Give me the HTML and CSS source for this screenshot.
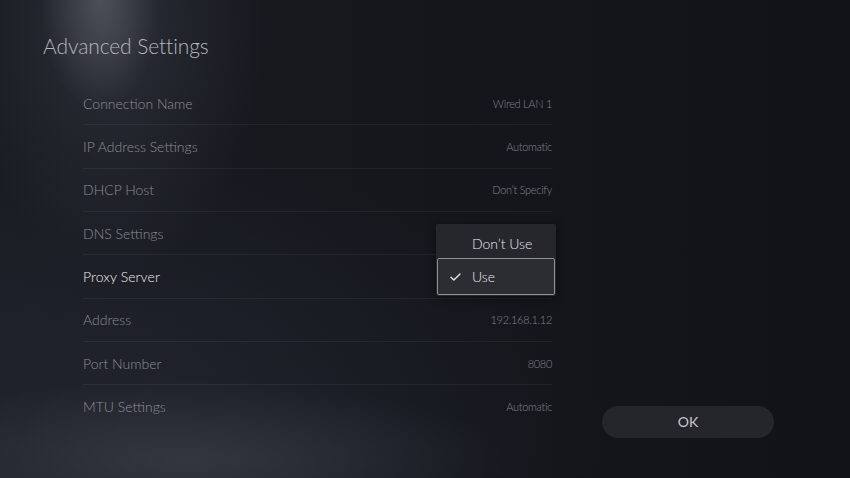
FILE: index.html
```html
<!DOCTYPE html>
<html lang="en">
<head>
<meta charset="utf-8">
<title>Advanced Settings</title>
<link rel="stylesheet" href="styles.css">
</head>
<body>
<div class="screen">
  <h1 class="title">Advanced Settings</h1>
  <div class="main">
    <ul class="list">
      <li class="row"><span class="label">Connection Name</span><span class="value">Wired LAN 1</span></li>
      <li class="row"><span class="label">IP Address Settings</span><span class="value">Automatic</span></li>
      <li class="row"><span class="label">DHCP Host</span><span class="value">Don’t Specify</span></li>
      <li class="row"><span class="label">DNS Settings</span><span class="value"></span></li>
      <li class="row row-active"><span class="label">Proxy Server</span><span class="value"></span>
        <div class="menu">
          <div class="menu-item">Don’t Use</div>
          <div class="menu-item menu-item-selected">
            <svg class="check" width="11" height="8" viewBox="0 0 11 8"><path d="M1 4.2 L3.9 7 L10 1" fill="none" stroke="#e4e5e8" stroke-width="1.4" stroke-linecap="round" stroke-linejoin="round"/></svg>
            <span>Use</span>
          </div>
        </div>
      </li>
      <li class="row"><span class="label">Address</span><span class="value">192.168.1.12</span></li>
      <li class="row"><span class="label">Port Number</span><span class="value">8080</span></li>
      <li class="row row-last"><span class="label">MTU Settings</span><span class="value">Automatic</span></li>
    </ul>
    <div class="actions">
      <button class="ok">OK</button>
    </div>
  </div>
</div>
</body>
</html>
```

FILE: styles.css
```css
html, body {
  margin: 0;
  padding: 0;
}
body {
  width: 850px;
  height: 478px;
  overflow: hidden;
  font-family: "Lato", "Open Sans", "Liberation Sans", sans-serif;
  background-color: #14161c;
  background-image:
    radial-gradient(ellipse 60px 110px at 100px 0px, rgba(120,124,135,0.45), rgba(120,124,135,0) 100%),
    radial-gradient(ellipse 150px 240px at 115px 30px, rgba(70,74,84,0.4), rgba(70,74,84,0) 100%),
    radial-gradient(ellipse 320px 80px at 190px 460px, rgba(70,75,86,0.5), rgba(70,75,86,0) 100%),
    radial-gradient(ellipse 480px 280px at 120px 430px, rgba(40,44,54,0.55), rgba(40,44,54,0) 100%),
    linear-gradient(90deg, #1a1c23 0%, #15171d 45%, #111318 100%);
}
.screen {
  padding: 34px 0 0 43px;
}
.title {
  margin: 0;
  font-size: 21px;
  line-height: 24px;
  font-weight: 300;
  color: #b3b6bc;
  letter-spacing: -0.1px;
}
.main {
  display: flex;
  align-items: flex-end;
  margin-left: 40px;
  margin-top: 24px;
}
.list {
  list-style: none;
  margin: 0;
  padding: 0;
  width: 469px;
}
.row {
  position: relative;
  box-sizing: border-box;
  height: 43.33px;
  display: flex;
  align-items: center;
  justify-content: space-between;
  border-bottom: 1px solid rgba(255,255,255,0.055);
}
.row-last {
  border-bottom-color: transparent;
}
.label {
  font-size: 14px;
  font-weight: 300;
  color: #8b8e95;
}
.row-active .label {
  color: #eeeff1;
  font-weight: 300;
  letter-spacing: 0.1px;
}
.value {
  font-size: 11px;
  font-weight: 300;
  color: #80838b;
  letter-spacing: -0.3px;
}
.menu {
  position: absolute;
  right: -4px;
  bottom: 2px;
  width: 120px;
  box-sizing: border-box;
  background: #25272d;
  border-radius: 2px;
  box-shadow: 0 2px 8px rgba(0,0,0,0.5);
  padding: 0 1px 1px 1px;
}
.menu-item {
  height: 34px;
  display: flex;
  align-items: center;
  padding-left: 35px;
  padding-top: 6px;
  box-sizing: border-box;
  font-size: 14px;
  font-weight: 300;
  color: #e8e9ec;
}
.menu-item-selected {
  position: relative;
  height: 37px;
  padding-top: 0;
  padding-left: 34px;
  border: 1px solid #8f9196;
  border-radius: 2px;
  background: #2b2d33;
}
.check {
  position: absolute;
  left: 12px;
  top: 14px;
}
.actions {
  display: flex;
  margin-left: 50px;
  margin-bottom: -9px;
}
.ok {
  display: block;
  width: 172px;
  height: 32px;
  border: none;
  border-radius: 16px;
  background: #24262b;
  color: #c9cacd;
  font-family: inherit;
  font-size: 14px;
  font-weight: 400;
}
```
